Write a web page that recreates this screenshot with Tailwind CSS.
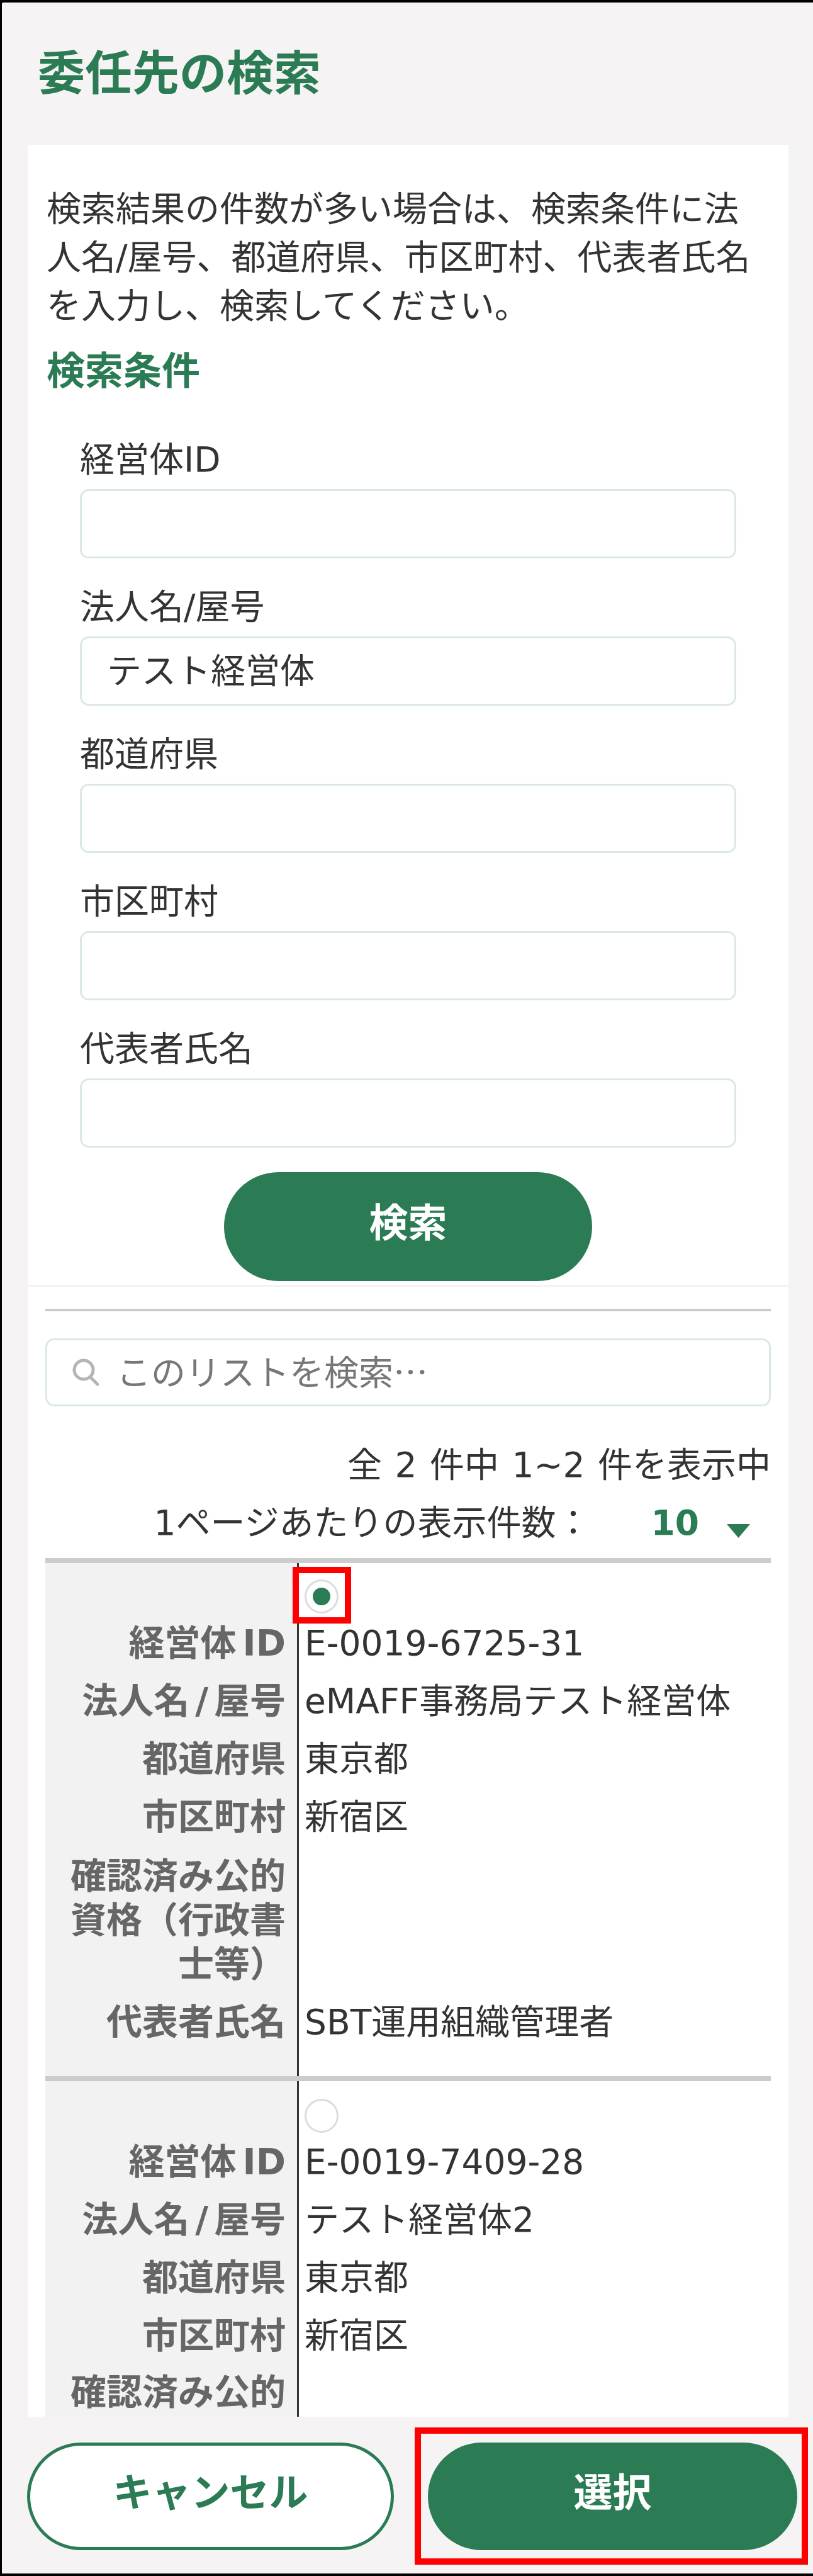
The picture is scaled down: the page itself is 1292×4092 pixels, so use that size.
<!DOCTYPE html>
<html lang="ja">
<head>
<meta charset="utf-8">
<script src="https://cdn.jsdelivr.net/npm/@tailwindcss/browser@4"></script>
</head>
<body class="bg-black">
<main class="w-[1292px] h-[4092px] border-t-[4px] border-l-[3px] border-b-[4px] border-black rounded-tl-[6px] overflow-hidden bg-[#f5f3f4] flex flex-col text-[#333] text-[55px] leading-[77px] font-['DejaVu_Sans','Noto_Sans_CJK_JP',sans-serif]">
  <header class="h-[226px] shrink-0 pl-[57px] flex items-center">
    <h1 class="text-[75px] font-bold text-[#2b7c54] leading-none">委任先の検索</h1>
  </header>

  <section class="ml-[41px] mr-[39px] flex-1 min-h-0 overflow-hidden bg-white">
    <div class="px-[30px] pt-[64px]">
      <p class="w-[1140px]">検索結果の件数が多い場合は、検索条件に法人名/屋号、都道府県、市区町村、代表者氏名を入力し、検索してください。</p>
      <h2 class="mt-[26px] font-bold text-[61px] text-[#2b7c54]">検索条件</h2>
    </div>

    <form class="px-[83px] mt-[64px] flex flex-col gap-[37px]">
      <label class="block">経営体ID<input class="mt-[8px] mb-[2px] block w-full h-[110px] rounded-[14px] border-[3px] border-[#dbe9e2] px-[40px] outline-none"></label>
      <label class="block">法人名/屋号<input value="テスト経営体" class="mt-[8px] mb-[2px] block w-full h-[110px] rounded-[14px] border-[3px] border-[#dbe9e2] px-[40px] pb-[10px] outline-none"></label>
      <label class="block">都道府県<input class="mt-[8px] mb-[2px] block w-full h-[110px] rounded-[14px] border-[3px] border-[#dbe9e2] px-[40px] outline-none"></label>
      <label class="block">市区町村<input class="mt-[8px] mb-[2px] block w-full h-[110px] rounded-[14px] border-[3px] border-[#dbe9e2] px-[40px] outline-none"></label>
      <label class="block">代表者氏名<input class="mt-[8px] mb-[2px] block w-full h-[110px] rounded-[14px] border-[3px] border-[#dbe9e2] px-[40px] outline-none"></label>
    </form>

    <div class="mt-[37px] flex justify-center">
      <button class="w-[585px] h-[173px] rounded-full bg-[#2b7c54] text-white font-bold text-[62px] leading-none pb-[10px]">検索</button>
    </div>

    <div class="mt-[6px] border-t-[3px] border-[#f3f3f3]"></div>

    <div class="px-[28px]">
      <div class="mt-[35px] h-[4px] bg-[#cccccc]"></div>

      <div class="mt-[43px] h-[108px] rounded-[14px] border-[3px] border-[#dbe9e2] flex items-center pl-[38px] gap-[26px] text-[#777]">
        <svg class="w-[46px] h-[46px] shrink-0" viewBox="0 0 46 46" fill="none" stroke="#b5b5b5" stroke-width="5" stroke-linecap="round"><circle cx="20" cy="19" r="15"/><path d="M31 31l11 11"/></svg>
        <span class="mb-[8px] font-['Noto_Sans_CJK_JP',sans-serif]">このリストを検索…</span>
      </div>

      <p class="mt-[55px] text-right [word-spacing:3px]">全 2 件中 1~2 件を表示中</p>
      <div class="mt-[15px] flex items-center justify-end">
        <span>1ページあたりの表示件数：</span>
        <span class="ml-[96px] font-bold text-[#2b7c54]">10</span>
        <svg class="ml-[44px] mr-[33px] mt-[24px] w-[37px] h-[22px]" viewBox="0 0 37 22"><path d="M0 0h37L18.500 22z" fill="#2b7c54"/></svg>
      </div>

      <div class="mt-[17px]">
        <!-- record 1 -->
        <div class="border-t-[8px] border-[#cccccc] grid grid-cols-[400px_1fr] pb-[42px] bg-[linear-gradient(to_right,#f2f2f2_400px,#333_400px,#333_403px,#fff_403px)]">
          <div class="h-[81px]"></div>
          <div class="h-[81px] pl-[12px] pt-[26px]">
            <span class="relative block w-[54px] h-[54px] rounded-full border-[3px] border-[#dcdcdc] bg-white">
              <span class="absolute inset-[10px] rounded-full bg-[#2b7c54]"></span>
              <span class="absolute left-[-22px] top-[-23px] w-[93px] h-[90px] border-[10px] border-[#ff0000]"></span>
            </span>
          </div>

          <div class="h-[92px] flex items-center justify-end pr-[18px] font-bold text-[57px] text-[#666]">経営体<span class="ml-[10px]">ID</span></div>
          <div class="h-[92px] flex items-center pl-[12px]">E-0019-6725-31</div>
          <div class="h-[92px] flex items-center justify-end pr-[18px] font-bold text-[57px] text-[#666]">法人名<span class="mx-[9px]">/</span>屋号</div>
          <div class="h-[92px] flex items-center pl-[12px]">eMAFF事務局テスト経営体</div>
          <div class="h-[92px] flex items-center justify-end pr-[18px] font-bold text-[57px] text-[#666]">都道府県</div>
          <div class="h-[92px] flex items-center pl-[12px]">東京都</div>
          <div class="h-[92px] flex items-center justify-end pr-[18px] font-bold text-[57px] text-[#666]">市区町村</div>
          <div class="h-[92px] flex items-center pl-[12px]">新宿区</div>
          <div class="h-[236px] flex items-center justify-end pr-[18px] font-bold text-[57px] text-[#666] text-right leading-[70px]"><span>確認済み公的<br>資格（行政書<br>士等）</span></div>
          <div class="h-[236px]"></div>
          <div class="h-[88px] flex items-center justify-end pr-[18px] font-bold text-[57px] text-[#666]">代表者氏名</div>
          <div class="h-[88px] flex items-center pl-[12px]">SBT運用組織管理者</div>
        </div>

        <!-- record 2 -->
        <div class="border-t-[8px] border-[#cccccc] grid grid-cols-[400px_1fr] bg-[linear-gradient(to_right,#f2f2f2_400px,#333_400px,#333_403px,#fff_403px)]">
          <div class="h-[82px]"></div>
          <div class="h-[82px] pl-[12px] pt-[28px]">
            <span class="block w-[54px] h-[54px] rounded-full border-[3px] border-[#dcdcdc] bg-white"></span>
          </div>
          <div class="h-[92px] flex items-center justify-end pr-[18px] font-bold text-[57px] text-[#666]">経営体<span class="ml-[10px]">ID</span></div>
          <div class="h-[92px] flex items-center pl-[12px]">E-0019-7409-28</div>
          <div class="h-[92px] flex items-center justify-end pr-[18px] font-bold text-[57px] text-[#666]">法人名<span class="mx-[9px]">/</span>屋号</div>
          <div class="h-[92px] flex items-center pl-[12px]">テスト経営体2</div>
          <div class="h-[92px] flex items-center justify-end pr-[18px] font-bold text-[57px] text-[#666]">都道府県</div>
          <div class="h-[92px] flex items-center pl-[12px]">東京都</div>
          <div class="h-[92px] flex items-center justify-end pr-[18px] font-bold text-[57px] text-[#666]">市区町村</div>
          <div class="h-[92px] flex items-center pl-[12px]">新宿区</div>
          <div class="h-[236px] flex items-start pt-[9px] justify-end pr-[18px] font-bold text-[57px] text-[#666] text-right leading-[70px]"><span>確認済み公的</span></div>
          <div class="h-[236px]"></div>
        </div>
      </div>
    </div>
  </section>

  <footer class="h-[249px] shrink-0 pl-[40px] pt-[41px] flex gap-[54px] font-bold text-[62px] leading-none">
    <button class="w-[583px] h-[171px] rounded-full border-[5px] border-[#2b7c54] bg-white text-[#2b7c54] pb-[10px]">キャンセル</button>
    <button class="relative w-[587px] h-[171px] rounded-full bg-[#2b7c54] text-white pb-[10px]">選択<span class="absolute left-[-21px] top-[-24px] w-[625px] h-[218px] border-[10px] border-[#ff0000]"></span></button>
  </footer>
</main>
</body>
</html>
